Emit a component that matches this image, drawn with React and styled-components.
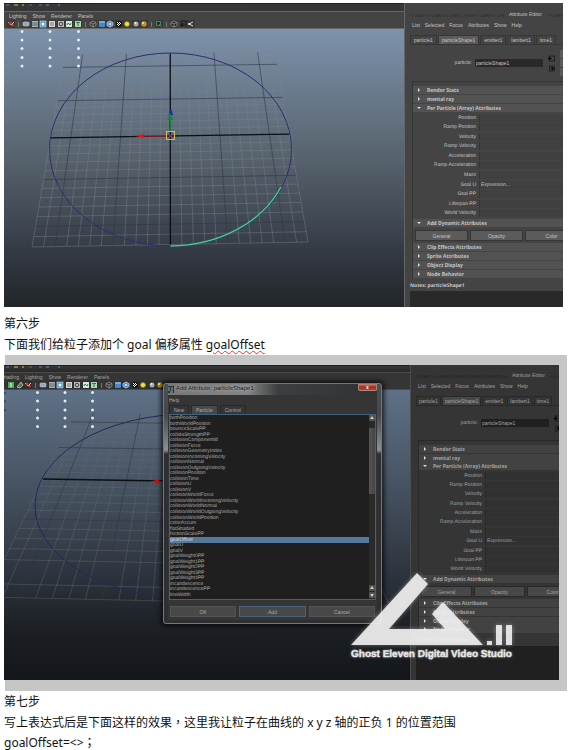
import React from "react";
import styled, { createGlobalStyle, css } from "styled-components";

const GlobalStyle = createGlobalStyle`
  * { box-sizing: border-box; }
  body { margin: 0; background: #fff; }
  button, input, textarea { font: inherit; color: inherit; margin: 0; }
`;

const Article = styled.main`
  padding: 3px 6px 0 4px;
  color: #111;
  font: 12px/21px "Noto Sans", "Noto Sans CJK SC", sans-serif;
`;

const Paragraph = styled.p`
  margin: 0;
  white-space: nowrap;
  ${(p) =>
    p.$last &&
    css`
      padding-top: 3px;
      line-height: 14px;
    `}
`;

const Punctuation = styled.span`
  font-family: "Noto Sans CJK TC", sans-serif;
  line-height: 1;
`;

const Steps = styled.section`
  padding-top: ${(p) => (p.$spaced ? "6px" : "0")};
`;

const Misspelled = styled.span`
  text-decoration: underline wavy #f03030 1px;
  text-underline-offset: 1px;
`;

const Frame = styled.div`
  background: #c6c6c6;
  padding: 10px 8px 11px 0;
  margin-left: 1px;
`;

const Shot = styled.figure`
  position: relative;
  display: flex;
  margin: 0 ${(p) => (p.$dim ? "0" : "4px")} 0 ${(p) => (p.$dim ? "-1px" : "0")};
  height: ${(p) => (p.$dim ? "315px" : "304px")};
  background: ${(p) => (p.$dim ? "#353535" : "#444")};
  color: ${(p) => (p.$dim ? "#a2a2a2" : "#c4c4c4")};
  font: 5px/8px "Liberation Sans", Arial, sans-serif;
  text-rendering: geometricPrecision;
  --line: ${(p) => (p.$dim ? "#4c4c4c" : "#666")};
  --edge: ${(p) => (p.$dim ? "#292929" : "#363636")};
  --head: ${(p) => (p.$dim ? "#424242" : "#525252")};
  --button: ${(p) => (p.$dim ? "#484848" : "#5b5b5b")};
  --field: ${(p) => (p.$dim ? "#202020" : "#292929")};
  --cell: ${(p) => (p.$dim ? "#313131" : "#404040")};
`;

const Viewport = styled.div`
  flex: 1;
  min-width: 0;
  display: flex;
  flex-direction: column;
  border-right: 1px solid var(--line);
`;

const Shelf = styled.div`
  height: ${(p) => (p.$dim ? "7px" : "8px")};
  border-top: 1px solid #202020;
  background: linear-gradient(#383838, var(--edge));
  svg { display: block; }
`;

const PanelMenu = styled.nav`
  display: flex;
  gap: 6px;
  height: 9px;
  padding-left: ${(p) => (p.$dim ? "0" : "5px")};
  border-top: 1px solid var(--line);
`;

const PlainButton = styled.button`
  border: 0;
  padding: 0;
  background: none;
  white-space: nowrap;
`;

const Toolbar = styled.div`
  display: flex;
  align-items: center;
  gap: 3px;
  height: 9px;
  padding-left: 3px;
  border-bottom: 1px solid var(--line);
`;

const ToolGroup = styled.div`
  display: flex;
  justify-content: space-between;
  width: ${(p) => p.$width}px;
`;

const ToolButton = styled(PlainButton)`
  display: block;
  width: 8px;
  height: 8px;
  svg { display: block; }
`;

const Divider = styled.span`
  width: 1px;
  height: 5px;
  background: #777;
`;

const Scene = styled.div`
  flex: 1;
  min-height: 0;
  overflow: hidden;
  background: ${(p) =>
    p.$dim
      ? "linear-gradient(#5f7187, #434f5d 37%, #2b313b 66%, #1b1e22 84%, #14171a)"
      : "linear-gradient(#7d92ac, #58646f 45%, #3c444f 72%, #2e333c 86%, #222629)"};
  svg { display: block; width: 100%; height: 100%; }
`;

const Editor = styled.aside`
  flex: 0 0 ${(p) => (p.$dim ? "148px" : "158px")};
  min-width: 0;
  overflow: hidden;
  padding-left: 5px;
  display: flex;
  flex-direction: column;
  > * { flex-shrink: 0; }
`;

const EditorTitle = styled.div`
  display: flex;
  align-items: center;
  gap: 5px;
  height: 10px;
  margin-top: ${(p) => (p.$dim ? "6px" : "7px")};
  white-space: nowrap;
  &::before, &::after {
    content: "";
    height: 3px;
    background: repeating-linear-gradient(135deg, transparent 0 1px, var(--edge) 1px 2px);
  }
  &::before { flex: 1; }
  &::after { flex: 0 0 ${(p) => (p.$dim ? "9px" : "16px")}; }
`;

const EditorMenu = styled.nav`
  display: flex;
  gap: 5px;
  height: 10px;
  padding-left: 2px;
`;

const Tabs = styled.div`
  display: flex;
  gap: 1px;
  margin-top: 5px;
  height: 10px;
  border-bottom: 1px solid var(--edge);
`;

const Tab = styled(PlainButton)`
  flex: 0 0 auto;
  padding: 0 ${(p) => (p.$narrow ? "2px" : "3px")};
  line-height: 9px;
  border: 1px solid var(--edge);
  border-bottom: 0;
  border-radius: 1px 1px 0 0;
  background: ${(p) => (p.$active ? "var(--button)" : "transparent")};
`;

const NameRow = styled.div`
  display: flex;
  align-items: center;
  gap: 3px;
  height: ${(p) => (p.$dim ? "34px" : "36px")};
  label { flex: 0 0 62px; text-align: right; }
`;

const NameField = styled.input`
  flex: 0 0 ${(p) => (p.$dim ? "65px" : "68px")};
  height: 8px;
  padding: 0 1px;
  border: 0;
  border-radius: 1px;
  background: var(--field);
`;

const Links = styled.div`
  display: flex;
  flex-direction: column;
  gap: 3px;
  margin-left: 2px;
`;

const LinkButton = styled(PlainButton)`
  display: block;
  width: 7px;
  height: 7px;
  svg { display: block; }
`;

const SideButtons = styled.div`
  display: flex;
  flex-direction: column;
  gap: 1px;
  margin-left: 2px;
  button { display: block; width: 12px; height: 8px; background: var(--button); }
`;

const Sections = styled.div`
  margin-left: 2px;
  padding-top: 4px;
  border-top: 1px solid var(--edge);
  border-left: 1px solid var(--edge);
`;

const SectionHead = styled(PlainButton)`
  display: flex;
  align-items: center;
  gap: 6px;
  width: 100%;
  height: 8px;
  margin-bottom: ${(p) => (p.$tight ? "0" : "1px")};
  padding-left: 4px;
  background: var(--head);
  font: bold 5px/8px "Noto Sans", sans-serif;
  svg { display: block; flex: 0 0 4px; }
`;

const Attributes = styled.dl`
  display: grid;
  grid-template-rows: repeat(11, 1fr);
  height: ${(p) => (p.$dim ? "104px" : "106px")};
  margin: 0 0 1px;
  padding-top: 1px;
`;

const Attribute = styled.div`
  display: grid;
  grid-template-columns: 63px 1fr;
  gap: 3px;
  align-items: center;
  min-height: 0;
  dt { text-align: right; white-space: nowrap; }
  dd { margin: 0; padding-left: 1px; height: 8px; background: var(--cell); border-left: 1px solid var(--edge); }
`;

const DynamicButtons = styled.div`
  display: flex;
  gap: 2px;
  margin: 3px 0 2px 2px;
  button {
    flex: 0 0 ${(p) => (p.$dim ? "51px" : "53px")};
    height: 11px;
    background: var(--button);
    border: 1px solid var(--edge);
  }
`;

const Notes = styled.label`
  && { flex: 1 1 0; }
  min-height: 0;
  display: flex;
  flex-direction: column;
  margin-top: 3px;
  font: bold 5px/9px "Noto Sans", sans-serif;
  textarea {
    flex: 1;
    min-height: 0;
    width: 100%;
    resize: none;
    border: 0;
    padding: 0;
    background: var(--field);
  }
`;

const Dialog = styled.section`
  position: absolute;
  left: 159px;
  top: 18px;
  width: 219px;
  padding: 0 4px 3px;
  border: 1px solid #777;
  border-radius: 3px;
  background: linear-gradient(#4d5052, #44484b 30px, #8d9092 66px, #2d2f31 70px);
  box-shadow: 0 0 5px 2px rgba(0, 0, 0, 0.75);
  color: #aaa;
`;

const DialogTitle = styled.header`
  display: flex;
  align-items: flex-start;
  gap: 2px;
  height: 11px;
  color: #111;
  background: linear-gradient(90deg, #777, #858585 80px, #3c3e40 110px, #303234);
  h2 {
    flex: 1;
    margin: 0;
    font: 6px/11px "Liberation Sans", Arial, sans-serif;
    text-shadow: 0 0 3px #ddd;
  }
  svg { display: block; margin-top: 2px; }
`;

const CloseButton = styled(PlainButton)`
  width: 19px;
  height: 7px;
  border: 1px solid #ad8580;
  border-top: 0;
  border-radius: 0 0 2px 2px;
  background: linear-gradient(#c6857b, #a82b1b 50%, #b9402e);
  color: #fff;
  font-weight: bold;
  line-height: 6px;
`;

const DialogBody = styled.div`
  background: #353535;
  padding: 1px 1px 2px;
`;

const DialogTabs = styled.div`
  display: flex;
  gap: 2px;
  height: 9px;
  button { padding: 0 4px; }
`;

const List = styled.div`
  display: flex;
  height: 186px;
  border: 1px solid #3f6280;
  background: #1f1f1f;
`;

const Options = styled.ul`
  flex: 1;
  display: grid;
  grid-template-rows: repeat(33, 1fr);
  margin: 0;
  padding: 1px 0;
  list-style: none;
`;

const Option = styled.li`
  display: flex;
  align-items: center;
  min-height: 0;
  line-height: 5px;
  ${(p) =>
    p.$selected &&
    css`
      background: #557799;
      color: #d5dde5;
    `}
`;

const Scrollbar = styled.div`
  width: 6px;
  display: flex;
  flex-direction: column;
  background: #2a2a2a;
`;

const ScrollButton = styled(PlainButton)`
  display: block;
  height: 6px;
  margin-bottom: 1px;
  background: #505050;
  svg { display: block; }
`;

const Thumb = styled.div`
  height: 66px;
  margin: 6px 0 auto;
  background: linear-gradient(90deg, #555, #454545);
`;

const DialogActions = styled.footer`
  display: grid;
  grid-template-columns: 1fr 1fr 1fr;
  gap: 3px;
  padding: 6px 1px 1px;
`;

const ActionButton = styled(PlainButton)`
  height: 11px;
  background: #484848;
  border: 1px solid ${(p) => (p.$primary ? "#48647d" : "#525252")};
`;

const Watermark = styled.div`
  position: absolute;
  left: 347px;
  top: 208px;
  width: 168px;
  color: #e8e8e8;
  font: bold 10px/12px "Liberation Sans", Arial, sans-serif;
  white-space: nowrap;
  text-shadow: 0 0 3px rgba(255, 255, 255, 0.5);
  -webkit-text-stroke: 0.4px #e8e8e8;
  svg { display: block; overflow: visible; filter: drop-shadow(0 0 2px rgba(255, 255, 255, 0.4)); }
`;

const iconShapes = {
  clip: <><path d="M1 2l3 3M4 5l3-3" stroke="#d9d9d9" /><circle cx="3" cy="3" r="1.6" fill="#c33" /><circle cx="5.500" cy="5" r="1.200" fill="#d44" /></>,
  green: <><rect x="1" y="1" width="6" height="6" fill="#4fae5b" /><path d="M4 2v4" stroke="#fff" /></>,
  leaf: <path d="M1 6L5 1l2 3-3 3z" fill="#55705a" stroke="#9cc3a0" />,
  camera: <><rect x="1" y="2" width="6" height="4" rx="1" fill="#96a7b7" stroke="#c5d0da" strokeWidth=".6" /></>,
  film: <><rect x="1" y="1" width="6" height="6" fill="#a9b2bb" /><path d="M1 3h6M1 5h6" stroke="#38424d" strokeWidth=".7" /></>,
  gate: <><rect x="1" y="1" width="6" height="6" fill="#4b9cd8" stroke="#d9e9f5" strokeWidth=".6" /><circle cx="4" cy="4" r="1.500" fill="#fff" /></>,
  box: <rect x="1.500" y="1.500" width="5" height="5" fill="#a6a6a6" stroke="#d9d9d9" />,
  ring: <><rect x="1" y="1" width="6" height="6" fill="#bcbcbc" /><circle cx="4" cy="4" r="1.800" fill="none" stroke="#444" /></>,
  chart: <><rect x="1" y="1" width="6" height="6" fill="#d5eadc" /><path d="M2 5l1-2 2 2 1-2" fill="none" stroke="#218b58" /></>,
  text: <><rect x="1" y="1" width="6" height="6" fill="#aed8b6" /><path d="M2 2.500h4M4 2.500V6" stroke="#2d7a3d" /></>,
  wire: <path d="M1 2.500L4 1l3 1.500v3L4 7 1 5.500zM1 2.500L4 4l3-1.500M4 4v3" fill="#333" stroke="#a5a5a5" strokeWidth=".7" />,
  solid: <><rect x="1" y="1" width="6" height="6" rx="1" fill="#4a88cd" /><path d="M1 2h6" stroke="#a8cef2" /></>,
  shaded: <><path d="M1 2.500L4 1l3 1.500v3L4 7 1 5.500z" fill="#5891cc" stroke="#c9dff5" strokeWidth=".7" /><circle cx="4" cy="4" r="1" fill="#e6f2ff" /></>,
  checker: <><circle cx="4" cy="4" r="3" fill="#111" /><path d="M2 2h1v1H2zm2 0h1v1H4zM3 3h1v1H3zm2 0h1v1H5zM2 4h1v1H2zm2 0h1v1H4zM3 5h1v1H3z" fill="#fff" /></>,
  sun: <circle cx="4" cy="4" r="2.500" fill="#f0ec25" stroke="#87843a" />,
  grey: <><circle cx="4" cy="4" r="2.500" fill="#a7a7a7" /><circle cx="3.500" cy="3" r="1" fill="#eee" /></>,
  gold: <><circle cx="4" cy="4" r="2.700" fill="#bd9328" /><circle cx="3" cy="3" r="1" fill="#ffed9b" /></>,
  select: <><rect x="1.500" y="1.500" width="4" height="4" fill="#292929" stroke="#3a8d59" /><path d="M4 4l3 3" stroke="#d33" /></>,
  cube: <path d="M1 2.500L4 1l3 1.500v3L4 7 1 5.500zM1 2.500L4 4l3-1.500M4 4v3" fill="#1c1c1c" stroke="#bbb" strokeWidth=".6" />,
  layers: <><rect x="1" y="3" width="4" height="4" fill="#181818" stroke="#555" strokeWidth=".6" /><rect x="3" y="1" width="4" height="4" fill="none" stroke="#222" /></>,
  share: <><path d="M6 2L2 4l4 2" fill="none" stroke="#ddd" /><circle cx="2" cy="4" r="1" fill="#eee" /></>,
};

const Icon = ({ name }) => (
  <svg width="8" height="8" viewBox="0 0 8 8" aria-hidden="true">
    <rect width="8" height="8" fill="#222" opacity=".3" />
    {iconShapes[name]}
  </svg>
);

const Tools = ({ names, width }) => (
  <ToolGroup $width={width}>
    {names.map((n) => (
      <ToolButton key={n} aria-label={n}><Icon name={n} /></ToolButton>
    ))}
  </ToolGroup>
);

/* Projects plane coordinates in [0,1] onto a quadrilateral (TL, TR, BR, BL). */
function makeProjection([[x0, y0], [x1, y1], [x2, y2], [x3, y3]]) {
  const sx = x0 - x1 + x2 - x3;
  const sy = y0 - y1 + y2 - y3;
  const dx1 = x1 - x2, dx2 = x3 - x2, dy1 = y1 - y2, dy2 = y3 - y2;
  const d = dx1 * dy2 - dx2 * dy1;
  const g = (sx * dy2 - dx2 * sy) / d;
  const h = (dx1 * sy - sx * dy1) / d;
  return (u, v) => {
    const w = g * u + h * v + 1;
    return [
      ((x1 - x0 + g * x1) * u + (x3 - x0 + h * x3) * v + x0) / w,
      ((y1 - y0 + g * y1) * u + (y3 - y0 + h * y3) * v + y0) / w,
    ];
  };
}

const steps = Array.from({ length: 25 }, (_, i) => i - 12);

function Grid({ quad, dim }) {
  const project = makeProjection(quad);
  const path = (list) =>
    list
      .map((k) => {
        const t = (k + 12) / 24;
        const ends = [project(t, 0), project(t, 1), project(0, t), project(1, t)];
        return `M${ends[0]}L${ends[1]}M${ends[2]}L${ends[3]}`;
      })
      .join("");
  return (
    <g fill="none">
      <path d={path(steps.filter((k) => k % 5))} stroke={dim ? "#66696c" : "#7f8385"} strokeWidth=".8" opacity=".55" />
      <path d={path([-10, -5, 5, 10])} stroke="#30383f" strokeWidth=".8" opacity=".75" />
      <path d={path([0])} stroke="#0b0e12" strokeWidth="1.300" />
    </g>
  );
}

const Particles = ({ xs, ys }) => (
  <g fill="#e6eaee">
    {xs.flatMap((x) => ys.map((y) => <circle key={`${x}-${y}`} cx={x} cy={y} r="1.500" />))}
  </g>
);

const FrontScene = () => (
  <Scene>
    <svg viewBox="4 29 400 278" preserveAspectRatio="none" role="img" aria-label="Perspective view">
      <Grid quad={[[65, 55], [275, 52], [308, 242], [32, 247]]} />
      <ellipse cx="170.500" cy="149.500" rx="121" ry="96.500" fill="none" stroke="#2b2f6e" />
      <path d="M170.500 246A121 96.500 0 0 0 281 187" fill="none" stroke="#45cf91" strokeWidth="1.300" />
      <path d="M170.500 131V118" stroke="#128032" strokeWidth="1.200" />
      <path d="M168.500 115l2.500-6 2 6z" fill="#1620c8" />
      <path d="M167.500 120l2.500-8 3 8z" fill="#128a2c" />
      <path d="M144 136h22" stroke="#c22" />
      <path d="M135 136l9-2v4z" fill="#e11" />
      <path d="M168 134l5 4M168 138l5-4" stroke="#a23aa0" />
      <rect x="166.500" y="131.500" width="8" height="8" fill="none" stroke="#cfc43c" />
      <Particles xs={[22, 50, 78.5]} ys={[31.5, 40, 48.5, 57.5, 66]} />
    </svg>
  </Scene>
);

const AngledScene = () => (
  <Scene $dim>
    <svg viewBox="4 390 406 290" preserveAspectRatio="none" role="img" aria-label="Perspective view">
      <Grid dim quad={[[75, 413], [300, 416], [390, 606], [-14, 597]]} />
      <ellipse cx="190" cy="506" rx="155" ry="92" fill="none" stroke="#23285c" />
      <path d="M158 481.500h14" stroke="#8c2020" />
      <path d="M150 481.500l9-2v4z" fill="#c11" />
      <Particles xs={[37.5, 65, 92.5]} ys={[392.5, 401, 410, 418, 426.5]} />
      <path d="M4 393h2M4 401.500h2M4 410h2" stroke="#33506e" strokeWidth="2" />
    </svg>
  </Scene>
);

const displayTools = ["camera", "film", "gate", "box", "ring", "chart", "text"];
const shadingTools = ["wire", "solid", "shaded", "checker", "sun", "grey", "gold"];

const ShelfBits = () => (
  <svg width="70" height="3" viewBox="0 0 70 3" aria-hidden="true">
    <path d="M2 1h3M35 1h3" stroke="#3a7fc8" /><path d="M10 1h4M18 1h2" stroke="#cfc143" />
    <path d="M25 1h3" stroke="#c0453a" /><path d="M42 1h3M54 1h2" stroke="#4c9bd0" />
  </svg>
);

const Arrow = ({ open }) => (
  <svg width="4" height="4" viewBox="0 0 4 4" aria-hidden="true">
    <path d={open ? "M0 1h4L2 3z" : "M1 0v4l2-2z"} fill="#ddd" />
  </svg>
);

const LinkIcon = ({ out }) => (
  <LinkButton aria-label={out ? "Go to output" : "Go to input"}>
    <svg width="7" height="7" viewBox="0 0 7 7">
      <rect x="1.500" y="1" width="5" height="5" fill="none" stroke="#151515" strokeWidth=".7" />
      <path d={out ? "M3 3.500h2M4 2l2 1.500L4 5z" : "M0 3.500h4M2 2L0 3.500 2 5z"} fill="#080808" stroke="#080808" strokeWidth=".8" />
    </svg>
  </LinkButton>
);

const attributeRows = ["Position", "Ramp Position", "Velocity", "Ramp Velocity", "Acceleration", "Ramp Acceleration", "Mass", "Goal U", "Goal PP", "Lifespan PP", "World Velocity"];

function AttributeEditor({ dim, id }) {
  return (
    <Editor $dim={dim}>
      <EditorTitle $dim={dim}>Attribute Editor</EditorTitle>
      <EditorMenu>
        {["List", "Selected", "Focus", "Attributes", "Show", "Help"].map((m) => <PlainButton key={m}>{m}</PlainButton>)}
      </EditorMenu>
      <Tabs role="tablist">
        {["particle1", "particleShape1", "emitter1", "lambert1", "time1"].map((t, i) => (
          <Tab key={t} role="tab" aria-selected={i === 1} $active={i === 1} $narrow={dim}>{t}</Tab>
        ))}
      </Tabs>
      <NameRow $dim={dim}>
        <label htmlFor={id}>particle:</label>
        <NameField id={id} $dim={dim} defaultValue="particleShape1" />
        <Links><LinkIcon /><LinkIcon out /></Links>
        <SideButtons>
          <PlainButton aria-label="Focus" /><PlainButton aria-label="Presets" /><PlainButton aria-label="Show" />
        </SideButtons>
      </NameRow>
      <Sections>
        <SectionHead><Arrow />Render Stats</SectionHead>
        <SectionHead $tight={dim}><Arrow />mental ray</SectionHead>
        <SectionHead $tight><Arrow open />Per Particle (Array) Attributes</SectionHead>
        <Attributes $dim={dim}>
          {attributeRows.map((a) => (
            <Attribute key={a}><dt>{a}</dt><dd>{a === "Goal U" ? "Expression..." : ""}</dd></Attribute>
          ))}
        </Attributes>
        <SectionHead $tight><Arrow open />Add Dynamic Attributes</SectionHead>
        <DynamicButtons $dim={dim}>
          <PlainButton>General</PlainButton><PlainButton>Opacity</PlainButton><PlainButton>Color</PlainButton>
        </DynamicButtons>
        <SectionHead><Arrow />Clip Effects Attributes</SectionHead>
        <SectionHead><Arrow />Sprite Attributes</SectionHead>
        <SectionHead $tight={dim}><Arrow />Object Display</SectionHead>
        <SectionHead><Arrow />Node Behavior</SectionHead>
      </Sections>
      <Notes>Notes: particleShape1<textarea /></Notes>
    </Editor>
  );
}

const options = ["birthPosition", "birthWorldPosition", "bounceScalePP", "collideStrengthPP", "collisionComponentId", "collisionForce", "collisionGeometryIndex", "collisionIncomingVelocity", "collisionNormal", "collisionOutgoingVelocity", "collisionPosition", "collisionTime", "collisionU", "collisionV", "collisionWorldForce", "collisionWorldIncomingVelocity", "collisionWorldNormal", "collisionWorldOutgoingVelocity", "collisionWorldPosition", "colorAccum", "flatShaded", "frictionScalePP", "goalOffset", "goalU", "goalV", "goalWeight0PP", "goalWeight1PP", "goalWeight2PP", "goalWeight3PP", "goalWeight4PP", "incandescence", "incandescencePP", "lineWidth"];

const ScrollArrow = ({ down }) => (
  <ScrollButton aria-label={down ? "Scroll down" : "Scroll up"}>
    <svg width="6" height="6" viewBox="0 0 6 6"><path d={down ? "M1 2h4L3 5z" : "M1 4h4L3 1z"} fill="#ccc" /></svg>
  </ScrollButton>
);

const AddAttributeDialog = () => (
  <Dialog role="dialog" aria-labelledby="dialog-title">
    <DialogTitle>
      <svg width="6" height="7" viewBox="0 0 6 7" aria-hidden="true"><path d="M0 0h6v7H0z" fill="#26333a" /><path d="M1 1v4M4 1v4M2 6h3" stroke="#9fb0b6" /></svg>
      <h2 id="dialog-title">Add Attribute: particleShape1</h2>
      <CloseButton aria-label="Close">x</CloseButton>
    </DialogTitle>
    <DialogBody>
      <PlainButton>Help</PlainButton>
      <DialogTabs role="tablist">
        {["New", "Particle", "Control"].map((t, i) => (
          <Tab key={t} role="tab" aria-selected={i === 1} $active={i === 1}>{t}</Tab>
        ))}
      </DialogTabs>
      <List>
        <Options role="listbox" aria-label="Attributes">
          {options.map((o) => (
            <Option key={o} role="option" aria-selected={o === "goalOffset"} $selected={o === "goalOffset"}>{o}</Option>
          ))}
        </Options>
        <Scrollbar><ScrollArrow /><Thumb /><ScrollArrow /><ScrollArrow down /></Scrollbar>
      </List>
      <DialogActions>
        <ActionButton>OK</ActionButton><ActionButton $primary>Add</ActionButton><ActionButton>Cancel</ActionButton>
      </DialogActions>
    </DialogBody>
  </Dialog>
);

const StudioMark = () => (
  <Watermark>
    <svg width="168" height="76" viewBox="351 573 168 76" aria-hidden="true">
      <path d="M417 573l11 11-39 45h56l-13-15 11-12 40 43H351zM487 641h5v4h-5zM496 625h6v20h-6zM506 625h6v20h-6z" fill="#eee" opacity=".9" />
    </svg>
    Ghost Eleven Digital Video Studio
  </Watermark>
);

export default function App() {
  return (
    <>
      <GlobalStyle />
      <Article>
        <Shot>
          <Viewport>
            <Shelf><ShelfBits /></Shelf>
            <PanelMenu>
              {["Lighting", "Show", "Renderer", "Panels"].map((m) => <PlainButton key={m}>{m}</PlainButton>)}
            </PanelMenu>
            <Toolbar>
              <Tools names={["clip"]} width={8} /><Divider />
              <Tools names={displayTools} width={60} /><Divider />
              <Tools names={shadingTools} width={59} /><Divider />
              <Tools names={["select"]} width={8} /><Divider />
              <Tools names={["cube", "layers", "share"]} width={25} />
            </Toolbar>
            <FrontScene />
          </Viewport>
          <AttributeEditor id="name-front" />
        </Shot>
        <Steps $spaced>
          <Paragraph>第六步</Paragraph>
          <Paragraph>下面我们给粒子添加个 goal 偏移属性 <Misspelled>goalOffset</Misspelled></Paragraph>
        </Steps>
        <Frame>
          <Shot $dim>
            <Viewport>
              <Shelf $dim><ShelfBits /></Shelf>
              <PanelMenu $dim>
                {["hading", "Lighting", "Show", "Renderer", "Panels"].map((m) => <PlainButton key={m}>{m}</PlainButton>)}
              </PanelMenu>
              <Toolbar>
                <Tools names={["green", "leaf", "clip"]} width={25} /><Divider />
                <Tools names={displayTools} width={59} /><Divider />
                <Tools names={shadingTools} width={59} /><Divider />
              </Toolbar>
              <AngledScene />
            </Viewport>
            <AttributeEditor dim id="name-angled" />
            <AddAttributeDialog />
            <StudioMark />
          </Shot>
        </Frame>
        <Steps>
          <Paragraph>第七步</Paragraph>
          <Paragraph>写上表达式后是下面这样的效果<Punctuation lang="zh-Hant">，</Punctuation>这里我让粒子在曲线的 x y z 轴的正负 1 的位置范围</Paragraph>
          <Paragraph $last>goalOffset=&lt;&gt;<Punctuation lang="zh-Hant">；</Punctuation></Paragraph>
        </Steps>
      </Article>
    </>
  );
}
